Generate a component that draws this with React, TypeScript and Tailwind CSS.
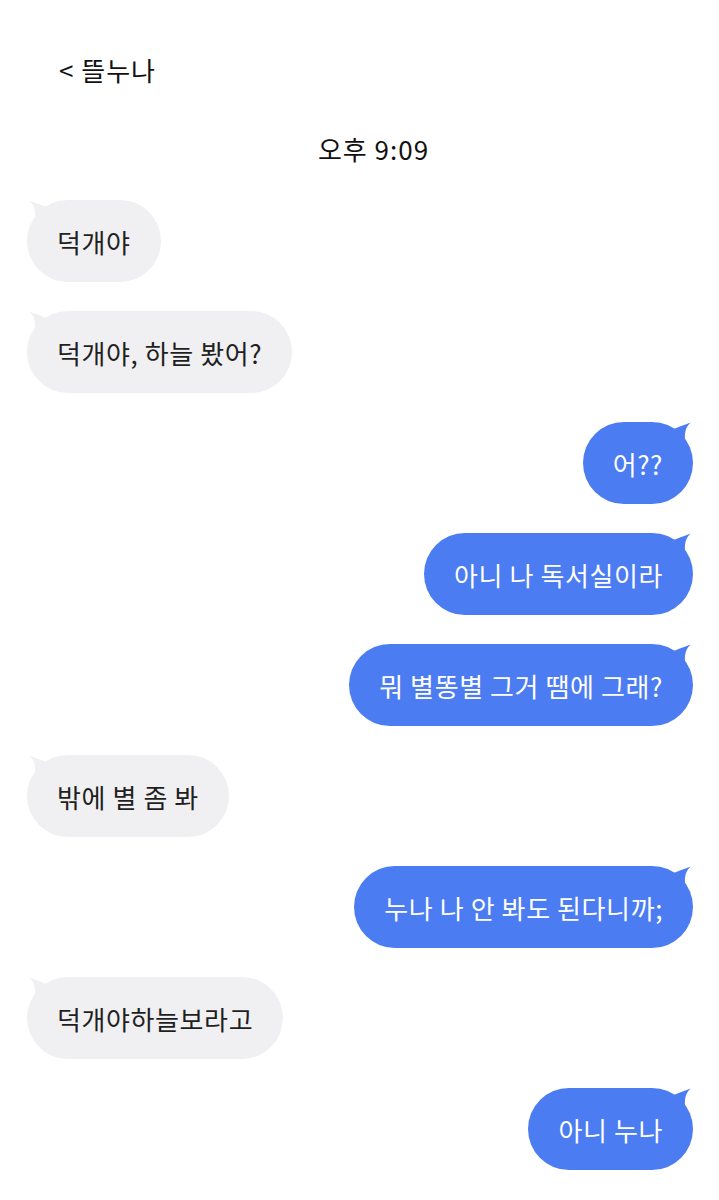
import React from 'react';

type Msg = { text: string; me: boolean };

const messages: Msg[] = [
  { text: '덕개야', me: false },
  { text: '덕개야, 하늘 봤어?', me: false },
  { text: '어??', me: true },
  { text: '아니 나 독서실이라', me: true },
  { text: '뭐 별똥별 그거 땜에 그래?', me: true },
  { text: '밖에 별 좀 봐', me: false },
  { text: '누나 나 안 봐도 된다니까;', me: true },
  { text: '덕개야하늘보라고', me: false },
  { text: '아니 누나', me: true },
];

function Ear({ me }: { me: boolean }) {
  // little horn on the top corner of each bubble
  if (me) {
    return (
      <svg
        className="absolute top-0 right-0 w-[28px] h-[30px] text-[#4b7cf1]"
        viewBox="0 0 28 30"
        fill="currentColor"
      >
        <path d="M6 8 C 12 5.5, 19 3, 25.5 0.5 C 21 5, 19.5 10, 20 17 L 6 17 Z" />
      </svg>
    );
  }
  return (
    <svg
      className="absolute top-0 left-0 w-[28px] h-[30px] text-[#f0f0f3]"
      viewBox="0 0 28 30"
      fill="currentColor"
    >
      <path d="M22 8 C 16 5.5, 9 3, 2.5 0.5 C 7 5, 8.5 10, 8 17 L 22 17 Z" />
    </svg>
  );
}

function Bubble({ text, me }: Msg) {
  return (
    <div className={me ? 'flex justify-end pr-[26px]' : 'flex justify-start pl-[27px]'}>
      <div
        className={
          'relative h-[82px] px-[30px] flex items-center rounded-full text-[26px] tracking-[0.6px] whitespace-pre ' +
          (me ? 'bg-[#4b7cf1] text-white' : 'bg-[#f0f0f3] text-[#1f1f22]')
        }
      >
        <Ear me={me} />
        <span className="relative">{text}</span>
      </div>
    </div>
  );
}

export default function App() {
  return (
    <div
      className="w-[719px] h-[1200px] bg-white overflow-hidden"
      style={{ fontFamily: '"Noto Sans CJK KR", "Noto Sans", sans-serif' }}
    >
      <div className="pt-[55px] pl-[59px] text-[26px] leading-[30px] tracking-[1px] text-[#111] whitespace-pre">
        &lt; 뜰누나
      </div>
      <div className="mt-[49px] pl-[28px] flex justify-center text-[26px] leading-[30px] tracking-[1px] text-[#111] whitespace-pre">
        오후 9:09
      </div>
      <div className="mt-[36px] flex flex-col gap-[29px]">
        {messages.map((m, i) => (
          <Bubble key={i} text={m.text} me={m.me} />
        ))}
      </div>
    </div>
  );
}
